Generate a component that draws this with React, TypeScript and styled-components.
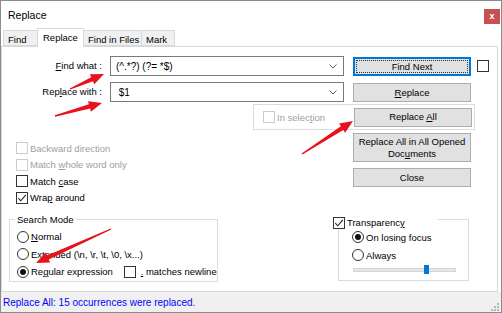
import React from 'react';
import styled, { createGlobalStyle } from 'styled-components';

const Global = createGlobalStyle`
  html, body { margin: 0; padding: 0; background: #fff; }
  body { font-family: "Liberation Sans", Arial, sans-serif; }
`;

const Window = styled.div`
  position: relative;
  width: 502px;
  height: 313px;
  box-sizing: border-box;
  border: 1px solid #8c8c8c;
  background: #fff;
  display: flex;
  flex-direction: column;
  font-family: "Liberation Sans", Arial, sans-serif;
  font-size: 9.5px;
  color: #000;
  overflow: hidden;
`;

const TitleBar = styled.div`
  height: 27px;
  flex-shrink: 0;
  display: flex;
  justify-content: space-between;
  align-items: flex-start;
  padding: 0 1px 0 7px;
`;

const Title = styled.div`
  font-size: 10.5px;
  line-height: 12px;
  margin-top: 8px;
`;

const CloseBtn = styled.div`
  width: 16px;
  height: 15px;
  margin-top: 8px;
  background: #c75050;
  color: #fff;
  font-size: 9px;
  font-weight: bold;
  line-height: 14px;
  text-align: center;
`;

const TabBar = styled.div`
  height: 18px;
  flex-shrink: 0;
  display: flex;
  align-items: flex-end;
  padding-left: 2px;
  position: relative;
  z-index: 1;
`;

const Tab = styled.div<{ $w: number; $active?: boolean }>`
  box-sizing: border-box;
  width: ${p => p.$w}px;
  height: ${p => (p.$active ? 19 : 16)}px;
  margin-bottom: ${p => (p.$active ? -1 : 0)}px;
  margin-right: -1px;
  border: 1px solid #d9d9d9;
  border-bottom: ${p => (p.$active ? 'none' : '1px solid #d9d9d9')};
  background: ${p => (p.$active ? '#fff' : '#f0f0f0')};
  padding: ${p => (p.$active ? '3px 0 0 5px' : '3px 0 0 4px')};
  line-height: 11px;
  white-space: nowrap;
  position: relative;
  z-index: ${p => (p.$active ? 2 : 1)};
`;

const Panel = styled.div`
  box-sizing: border-box;
  height: 246px;
  flex-shrink: 0;
  margin-right: 3px;
  border: 1px solid #d9d9d9;
  background: #fff;
  display: flex;
  flex-direction: column;
`;

const TopGrid = styled.div`
  display: grid;
  grid-template-columns: 102px 234px 118px 12px;
  grid-auto-rows: 20px;
  column-gap: 0;
  row-gap: 6px;
  padding-top: 9px;
  & > :nth-child(4n + 2) { margin-left: 6px; }
  & > :nth-child(4n + 3) { margin-left: 9px; }
  & > :nth-child(4n + 4) { margin-left: 6px; }
  grid-template-columns: 102px 240px 127px 18px;
`;

const FieldLabel = styled.div`
  text-align: right;
  padding-right: 2px;
  line-height: 20px;
  white-space: nowrap;
`;

const Combo = styled.div`
  box-sizing: border-box;
  width: 234px;
  height: 20px;
  border: 1px solid #7a7a7a;
  background: #fff;
  display: flex;
  align-items: center;
  padding: 0 6px 0 5px;
  justify-content: space-between;
  font-size: 10px;
`;

const Button = styled.div<{ $h?: number; $focused?: boolean }>`
  box-sizing: border-box;
  position: relative;
  width: 118px;
  height: ${p => p.$h ?? 19}px;
  margin-top: ${p => (p.$h ? 0 : 1)}px;
  background: #e1e1e1;
  border: 1px solid ${p => (p.$focused ? '#0078d7' : '#adadad')};
  box-shadow: ${p => (p.$focused ? 'inset 0 0 0 1px #0078d7' : 'none')};
  display: flex;
  align-items: center;
  justify-content: center;
  text-align: center;
  line-height: 11.5px;
  white-space: pre-line;
  &::after {
    content: '';
    display: ${p => (p.$focused ? 'block' : 'none')};
    position: absolute;
    inset: 2px;
    border: 1px dotted #333;
  }
`;

const Box = styled.div<{ $checked?: boolean; $disabled?: boolean }>`
  box-sizing: border-box;
  width: 12px;
  height: 12px;
  flex-shrink: 0;
  border: 1px solid ${p => (p.$disabled ? '#cccccc' : '#333')};
  background: #fff;
  display: flex;
  align-items: center;
  justify-content: center;
`;

const CheckSvg = () => (
  <svg width="10" height="10" viewBox="0 0 10 10">
    <path d="M1.3 5.2 L3.8 7.8 L8.8 1.8" fill="none" stroke="#222" strokeWidth="1.1" />
  </svg>
);

const Checkbox: React.FC<{ checked?: boolean; disabled?: boolean }> = ({ checked, disabled }) => (
  <Box $checked={checked} $disabled={disabled}>{checked && <CheckSvg />}</Box>
);

const Radio = styled.div<{ $on?: boolean }>`
  box-sizing: border-box;
  width: 12px;
  height: 12px;
  flex-shrink: 0;
  border-radius: 50%;
  border: 1px solid #333;
  background: #fff;
  display: flex;
  align-items: center;
  justify-content: center;
  &::after {
    content: '';
    display: ${p => (p.$on ? 'block' : 'none')};
    width: 6px;
    height: 6px;
    border-radius: 50%;
    background: #111;
  }
`;

const Option = styled.div<{ $h?: number; $disabled?: boolean; $w?: number }>`
  display: flex;
  align-items: center;
  gap: 2px;
  height: ${p => p.$h ?? 16.5}px;
  color: ${p => (p.$disabled ? '#a0a0a0' : '#000')};
  white-space: nowrap;
  ${p => (p.$w ? `width: ${p.$w}px;` : '')}
`;

const U = styled.span`
  text-decoration: underline;
`;

const InSelRow = styled.div`
  margin-top: 2px;
  padding-left: 251px;
`;

const InSelBox = styled.div`
  box-sizing: border-box;
  width: 222px;
  height: 26px;
  border: 1px solid #dcdcdc;
  display: flex;
  align-items: center;
  padding-left: 9px;
  padding-right: 2px;
  & > :last-child { margin-left: auto; margin-top: 0; }
`;

const Lower = styled.div`
  display: grid;
  grid-template-columns: 337px 118px;
  padding-left: 14px;
  height: 89px;
  box-sizing: border-box;
`;

const LeftCol = styled.div`
  padding-top: 10px;
  display: flex;
  flex-direction: column;
`;

const RightCol = styled.div`
  padding-top: 3px;
  display: flex;
  flex-direction: column;
  gap: 6px;
  & > * { margin-top: 0; }
`;

const Groups = styled.div`
  display: flex;
  align-items: flex-start;
  padding-left: 7px;
`;

const GroupBox = styled.div<{ $w: number; $h: number; $ml?: number; $pl: number; $pt: number }>`
  position: relative;
  box-sizing: border-box;
  width: ${p => p.$w}px;
  height: ${p => p.$h}px;
  margin-left: ${p => p.$ml ?? 0}px;
  border: 1px solid #dcdcdc;
  padding: ${p => p.$pt}px 0 0 ${p => p.$pl}px;
  display: flex;
  flex-direction: column;
`;

const Legend = styled.div<{ $left: number; $top: number; $w?: number }>`
  position: absolute;
  left: ${p => p.$left}px;
  top: ${p => p.$top}px;
  ${p => (p.$w ? `width: ${p.$w}px;` : 'padding: 0 2px;')}
  height: 13px;
  background: #fff;
  display: flex;
  align-items: center;
  gap: 2px;
  line-height: 13px;
  white-space: nowrap;
`;

const Row = styled.div`
  display: flex;
  align-items: center;
`;

const Slider = styled.div`
  position: relative;
  box-sizing: border-box;
  margin-left: 1px;
  margin-top: 4px;
  width: 103px;
  height: 4px;
  background: #e7e7e7;
  border: 1px solid #d6d6d6;
`;

const Thumb = styled.div`
  position: absolute;
  top: -4px;
  width: 5px;
  height: 9px;
  background: #0078d7;
`;

const StatusBar = styled.div`
  flex: 1;
  background: #f0f0f0;
  display: flex;
  align-items: center;
  justify-content: space-between;
  padding-left: 2px;
  color: #0000ff;
  font-size: 10px;
`;

const Grip = () => (
  <svg width="11" height="11" viewBox="0 0 11 11" style={{ alignSelf: 'flex-end', marginRight: 1, marginBottom: 0 }}>
    {[[8, 2], [5, 5], [8, 5], [2, 8], [5, 8], [8, 8]].map(([x, y], i) => (
      <rect key={i} x={x} y={y} width="2" height="2" fill="#b8b8b8" />
    ))}
  </svg>
);

const Chevron = () => (
  <svg width="8" height="5" viewBox="0 0 8 5">
    <path d="M0.5 0.5 L4 4 L7.5 0.5" fill="none" stroke="#555" strokeWidth="1" />
  </svg>
);

const Overlay = styled.svg`
  position: absolute;
  left: -1px;
  top: -1px;
  pointer-events: none;
  z-index: 10;
`;

function arrowPoints(tx: number, ty: number, hx: number, hy: number) {
  const dx = hx - tx, dy = hy - ty;
  const len = Math.hypot(dx, dy);
  const ux = dx / len, uy = dy / len;
  const nx = -uy, ny = ux;
  const L = 13, H = 5.5, sw = 2.2, tw = 0.7;
  const bx = hx - ux * L, by = hy - uy * L;
  const pts = [
    [hx, hy],
    [bx + nx * H, by + ny * H],
    [bx + nx * sw, by + ny * sw],
    [tx + nx * tw, ty + ny * tw],
    [tx - nx * tw, ty - ny * tw],
    [bx - nx * sw, by - ny * sw],
    [bx - nx * H, by - ny * H],
  ];
  return pts.map(p => p.map(v => v.toFixed(1)).join(',')).join(' ');
}

const arrows: [number, number, number, number][] = [
  [70, 89, 104, 74],
  [55, 116, 102, 103],
  [302, 154, 353, 121],
  [111, 229, 36, 263],
];

export default function App() {
  return (
    <>
      <Global />
      <Window>
        <TitleBar>
          <Title>Replace</Title>
          <CloseBtn>x</CloseBtn>
        </TitleBar>
        <TabBar>
          <Tab $w={35}>Find</Tab>
          <Tab $w={47} $active>Replace</Tab>
          <Tab $w={59}>Find in Files</Tab>
          <Tab $w={34}>Mark</Tab>
        </TabBar>
        <Panel>
          <TopGrid>
            <FieldLabel><U>F</U>ind what :</FieldLabel>
            <Combo><span>(^.*?) (?= *$)</span><Chevron /></Combo>
            <Button $focused>Find Next</Button>
            <Row style={{ height: 20 }}><Checkbox /></Row>
            <FieldLabel>Rep<U>l</U>ace with :</FieldLabel>
            <Combo><span>&nbsp;$1</span><Chevron /></Combo>
            <Button><span><U>R</U>eplace</span></Button>
            <div />
          </TopGrid>
          <InSelRow>
            <InSelBox>
              <Option $disabled $h={24}>
                <Checkbox disabled />
                <span>In selec<U>t</U>ion</span>
              </Option>
              <Button><span>Replace <U>A</U>ll</span></Button>
            </InSelBox>
          </InSelRow>
          <Lower>
            <LeftCol>
              <Option $disabled><Checkbox disabled /><span>Backward direction</span></Option>
              <Option $disabled><Checkbox disabled /><span>Match <U>w</U>hole word only</span></Option>
              <Option><Checkbox /><span>Match <U>c</U>ase</span></Option>
              <Option><Checkbox checked /><span>Wra<U>p</U> around</span></Option>
            </LeftCol>
            <RightCol>
              <Button $h={29}><span>Replace All in All Opened{'\n'}Doc<U>u</U>ments</span></Button>
              <Button>Close</Button>
            </RightCol>
          </Lower>
          <Groups>
            <GroupBox $w={209} $h={63} $pl={7} $pt={8}>
              <Legend $left={5} $top={-7}>Search Mode</Legend>
              <Option $h={17.5}><Radio /><span><U>N</U>ormal</span></Option>
              <Option $h={17.5}><Radio /><span>Ex<U>t</U>ended (\n, \r, \t, \0, \x...)</span></Option>
              <Row>
                <Option $h={17.5} $w={107}><Radio $on /><span>Re<U>g</U>ular expression</span></Option>
                <Option $h={17.5}><Checkbox /><span>&nbsp;<U>.</U> matches newline</span></Option>
              </Row>
            </GroupBox>
            <GroupBox $w={131} $h={62} $ml={120} $pl={13} $pt={8}>
              <Legend $left={-6} $top={-4} $w={105}>
                <Checkbox checked />
                <span>Transparenc<U>y</U></span>
              </Legend>
              <Option $h={18}><Radio $on /><span>On losing focus</span></Option>
              <Option $h={18}><Radio /><span>Always</span></Option>
              <Slider><Thumb style={{ left: 70 }} /></Slider>
            </GroupBox>
          </Groups>
        </Panel>
        <StatusBar>
          <span>Replace All: 15 occurrences were replaced.</span>
          <Grip />
        </StatusBar>
        <Overlay width="502" height="313" viewBox="0 0 502 313">
          {arrows.map((a, i) => (
            <polygon key={i} points={arrowPoints(a[0], a[1], a[2], a[3])} fill="#e8121c" />
          ))}
        </Overlay>
      </Window>
    </>
  );
}
